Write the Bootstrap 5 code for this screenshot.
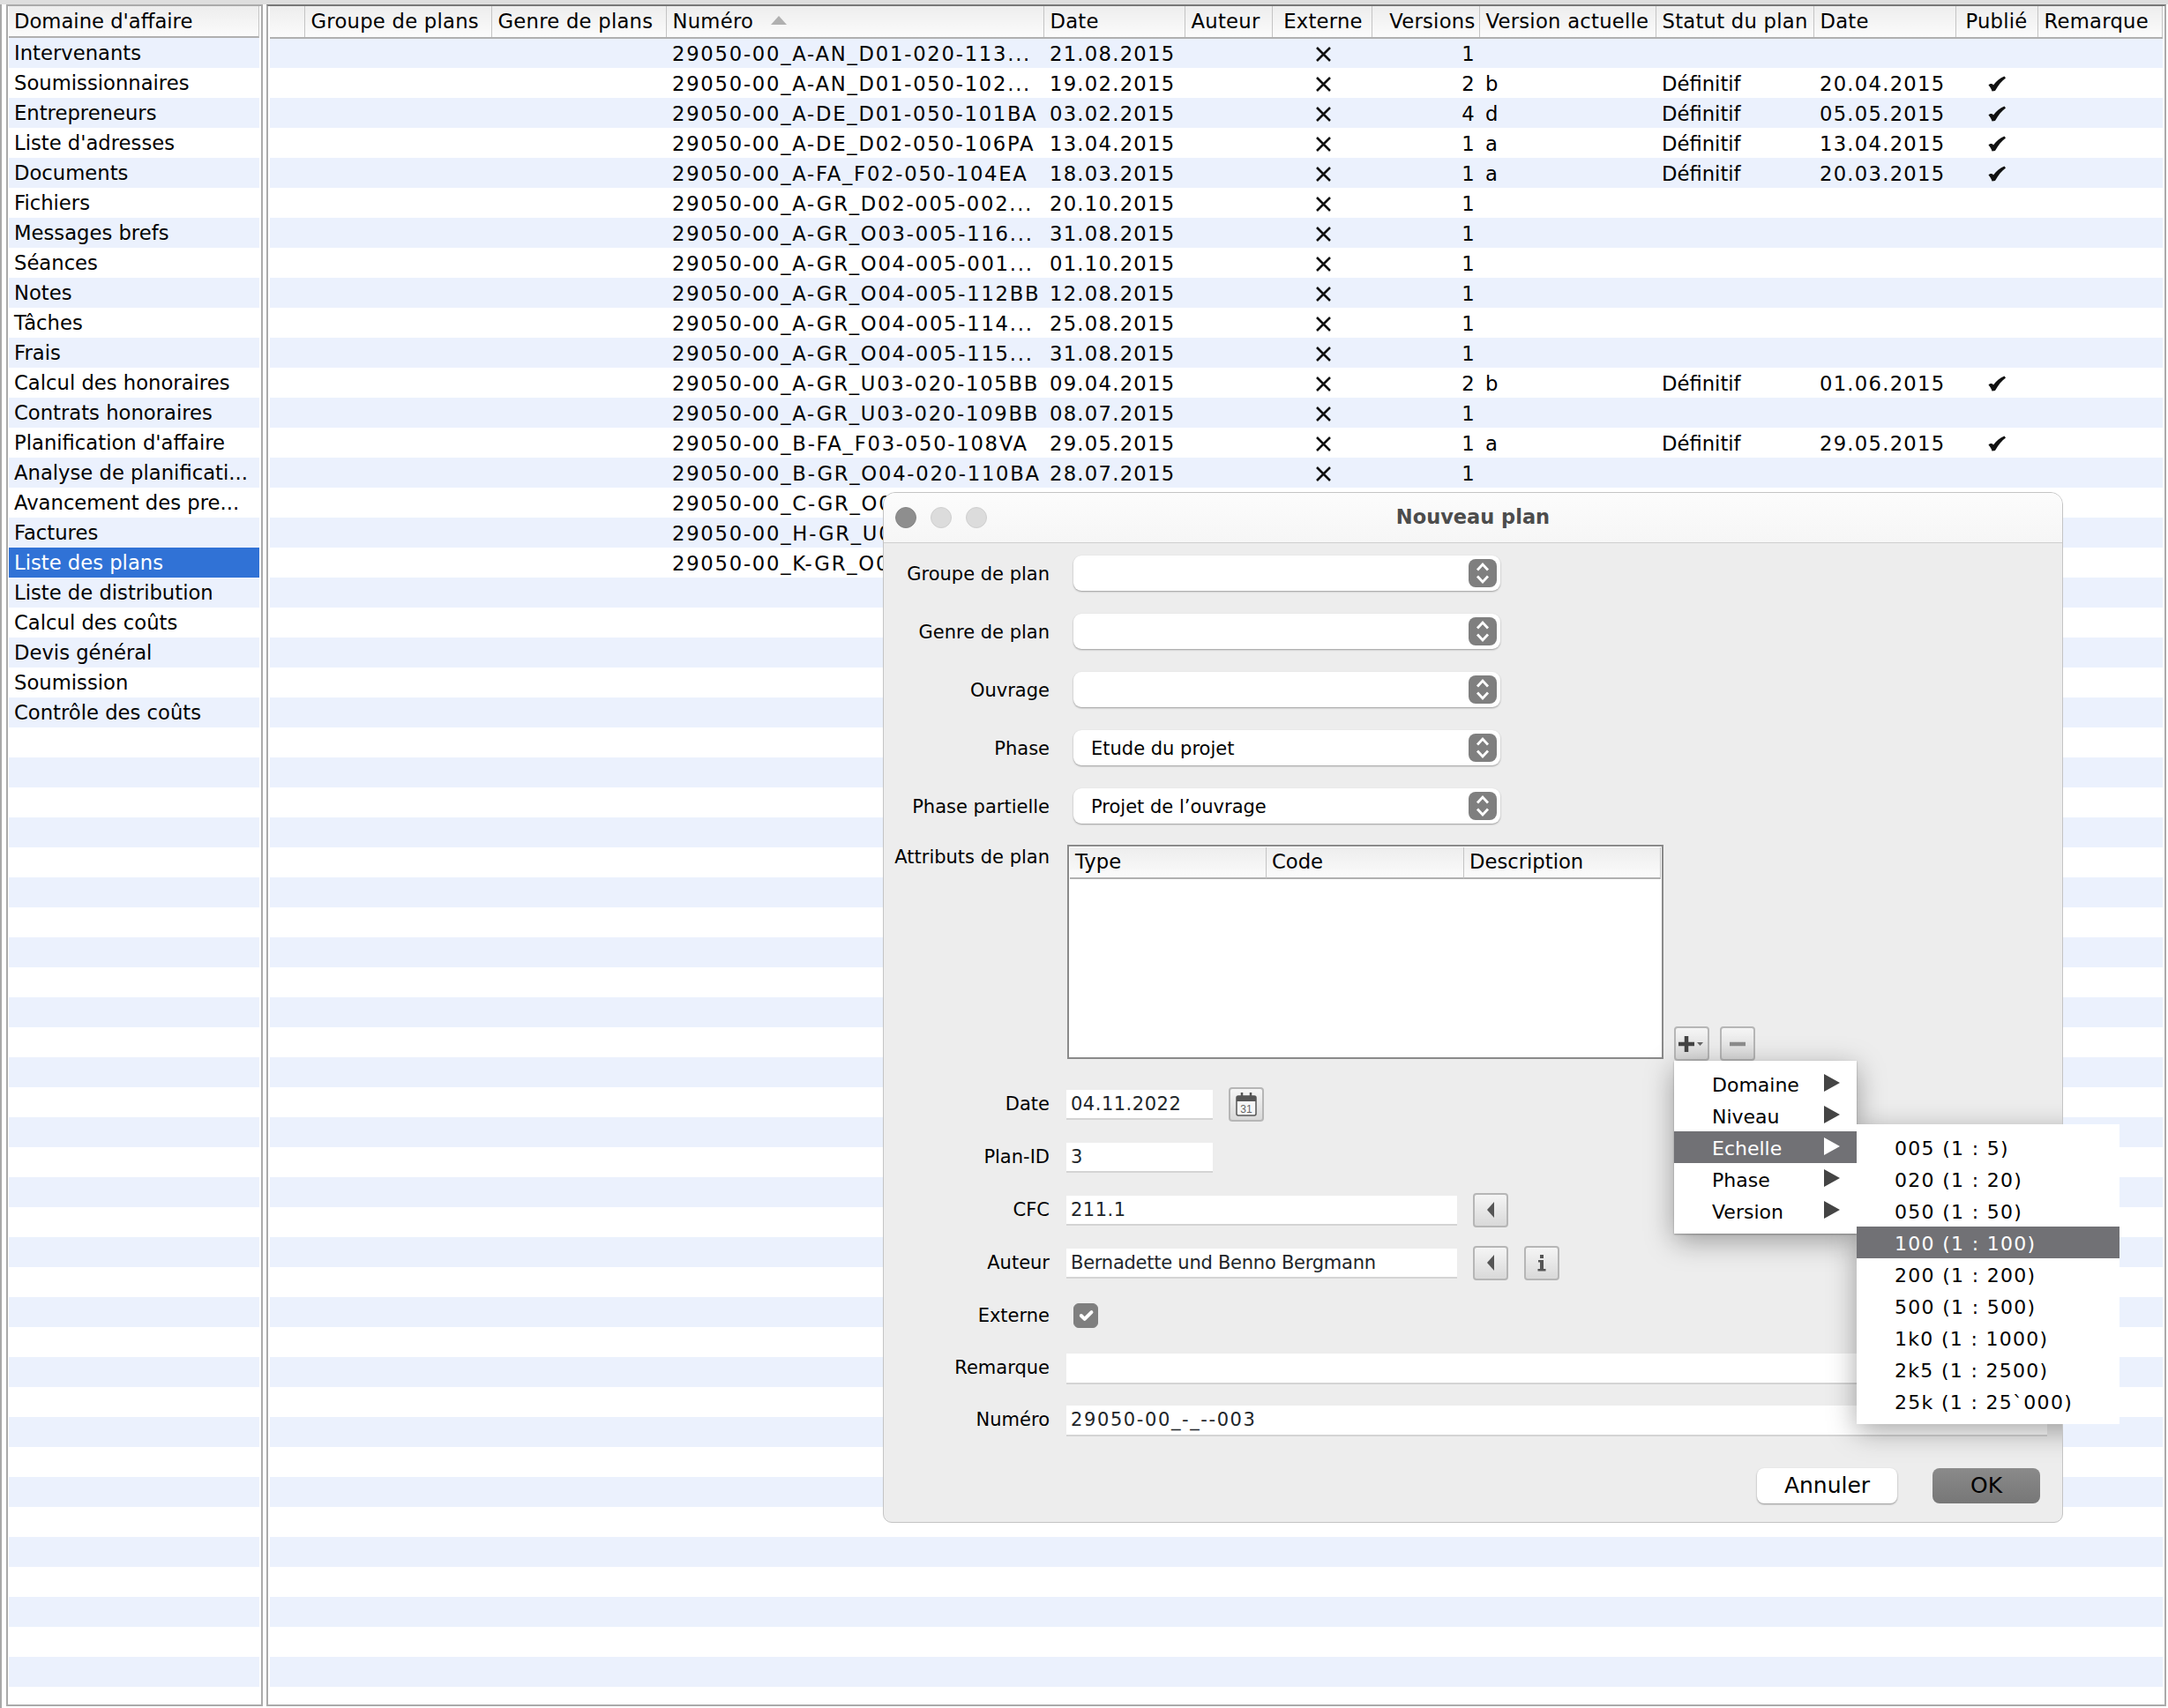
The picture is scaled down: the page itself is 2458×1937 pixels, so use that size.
<!DOCTYPE html>
<html lang="fr">
<head>
    <meta charset="UTF-8">
    <meta name="viewport" content="width=device-width, initial-scale=1.0">
    <title>Liste des plans</title>
    <link href="https://cdn.jsdelivr.net/npm/bootstrap@5.3.2/dist/css/bootstrap.min.css" rel="stylesheet">
    <style>
        html, body { height: 100%; overflow: hidden; }
        body { font-family: "DejaVu Sans", sans-serif; font-size: 22.7px; color: #000; background: #fff; }

        /* main window */
        .top-strip { height: 5px; background: #dedede; flex: none; }
        .panels { flex: 1; min-height: 0; border-left: 2px solid #a8a8a8; padding-left: 5px; padding-bottom: 2px; }
        .side-panel { width: 291px; flex: none; border: 2px solid #aaa; padding: 0 2px 0 1px; margin-right: 4px; }
        .main-panel { flex: 1; min-width: 0; border: 2px solid #aaa; border-top-color: #777; padding: 0 2px; margin-right: 2px; }
        .stripes { background: repeating-linear-gradient(#ebf1fd 0 34px, #fff 34px 68px); background-position: 0 36px; background-origin: content-box; background-clip: content-box; }
        .col-head { height: 36px; line-height: 35px; padding: 0 6px; background: linear-gradient(#ededed, #fbfbfb); border-bottom: 2px solid #b0b0b0; border-right: 1px solid #c4c4c4; white-space: nowrap; overflow: hidden; }
        .list-group { --bs-list-group-bg: transparent; --bs-list-group-color: #000; --bs-list-group-active-bg: #3072d6; --bs-list-group-active-color: #fff; --bs-list-group-border-width: 0; --bs-list-group-border-radius: 0; }
        .list-group-item { height: 34px; line-height: 35px; padding: 0 6px; white-space: nowrap; overflow: hidden; }

        .table { --bs-table-bg: transparent; --bs-table-color: #000; --bs-border-width: 0; table-layout: fixed; margin: 0; }
        .table > :not(caption) > * > * { padding: 1px 7px 0; height: 34px; line-height: 33px; vertical-align: middle; white-space: nowrap; overflow: hidden; box-shadow: none; border-bottom-width: 0; }
        .table > thead > tr > th { height: 36px; padding-top: 0; line-height: 35px; font-weight: 400; letter-spacing: .25px; background: linear-gradient(#ededed, #fbfbfb); border-bottom: 2px solid #b0b0b0; border-right: 1px solid #c4c4c4; }
        .table > :not(caption) > * > .tight { padding-right: 4px; }
        .table > :not(caption) > * > .ext-col { padding-left: 10px; }
        .plans td { letter-spacing: 1.25px; }
        .plans td.no { letter-spacing: 1.75px; }
        .plans td.st { letter-spacing: 0; }
        .plans td svg { margin-top: -3px; }
        .sort-up { display: inline-block; width: 18px; height: 10px; margin-left: 12px; vertical-align: 4px; }

        /* dialog */
        .dialog { left: 1001px; top: 558px; width: 1338px; height: 1169px; background: #ededed; border: 1px solid #c4c4c4; border-radius: 14px 14px 10px 10px; overflow: hidden; font-size: 21px; }
        .title-bar { height: 57px; background: linear-gradient(#fcfcfc, #f6f6f6); border-bottom: 1px solid #cfcfcf; padding-left: 13px; }
        .light { width: 24px; height: 24px; border-radius: 50%; background: #dcdcdc; border: 1px solid #cfcfcf; margin-right: 16px; }
        .light.on { background: #8e8e8e; border-color: #858585; }
        .title-text { left: 0; right: 0; top: 0; line-height: 54px; text-align: center; font-weight: 700; font-size: 22.5px; color: #4c4c4c; }
        .dialog-body { padding-top: 14px; }
        .lbl { width: 188px; flex: none; text-align: right; white-space: nowrap; padding-top: 3px; }
        .sel { width: 484px; height: 40px; margin-left: 27px; padding: 0 4px 0 20px; background: #fff; border-radius: 9px; box-shadow: 0 1px 2px rgba(0,0,0,.35); }
        .sel span { padding-top: 3px; }
        .stepper { width: 32px; height: 32px; border-radius: 8px; background: #7f7f7f; }
        .sel-row { margin-bottom: 26px; }
        .attr-row { height: 245px; margin-top: -2px; margin-bottom: 29px; }
        .attr-lbl { line-height: 25px; padding-top: 2px; }
        .attr-table { width: 676px; height: 243px; margin-left: 20px; background: #fff; border: 2px solid #8a8a8a; padding: 1px; align-self: flex-start; }
        .attr-table .col-head { height: 36px; line-height: 32px; padding: 0 6px; font-size: 22.7px; }
        .mini-btn { --bs-btn-padding-x: 0; --bs-btn-padding-y: 0; --bs-btn-border-radius: 4px; --bs-btn-border-width: 2px; --bs-btn-border-color: #b6b6b6; --bs-btn-hover-border-color: #b6b6b6; width: 40px; height: 39px; flex: none; background: linear-gradient(#f5f5f5, #d9d9d9); display: flex; align-items: center; justify-content: center; }
        .f-row { height: 40px; margin-bottom: 20px; }
        .f-row .lbl { padding-top: 1px; }
        .f-row.thin { height: 38px; margin-bottom: 21px; }
        .form-control.fld { height: 32px; margin-left: 19px; padding: 0 5px; line-height: 32px; font-size: 21px; letter-spacing: .5px; border: 0; border-radius: 0; background: #fff; box-shadow: 0 2px 0 #d4d4d4; white-space: nowrap; }
        .form-control.fld.name { letter-spacing: -.25px; }
        .form-control.fld.code { letter-spacing: 1.6px; }
        .thin .form-control.fld { height: 33px; width: 1112px; flex: none; }
        .w-short { width: 166px; flex: none; }
        .w-long { width: 443px; flex: none; }
        .form-check-input.ext { width: 28px; height: 28px; margin: 0 0 0 27px; border-radius: 6px; background-color: #7f7f7f; border-color: #7f7f7f; }
        .act { margin-left: 18px; }
        .footer-btns { margin-top: 36px; padding-right: 25px; gap: 40px; }
        .btn-annuler, .btn-ok { --bs-btn-border-radius: 8px; --bs-btn-border-width: 0; height: 40px; padding: 0; font-size: 25px; line-height: 40px; color: #000; }
        .btn-annuler { width: 159px; background: #fff; box-shadow: 0 1px 2px rgba(0,0,0,.4); }
        .btn-ok { width: 122px; background: linear-gradient(#8a8a8a, #777); }

        /* popup menus */
        .menu-shadow { box-shadow: 0 8px 30px rgba(0,0,0,.35); }
        .dropdown-menu.pop { --bs-dropdown-bg: #fff; --bs-dropdown-border-width: 0; --bs-dropdown-border-radius: 0; --bs-dropdown-padding-y: 8px; --bs-dropdown-padding-x: 0; --bs-dropdown-font-size: 22px; --bs-dropdown-color: #000; --bs-dropdown-link-color: #000; --bs-dropdown-link-active-bg: #717175; --bs-dropdown-link-active-color: #fff; --bs-dropdown-item-padding-y: 0; min-width: 0; }
        .pop .dropdown-item { height: 36px; line-height: 40px; }
        .menu-one { left: 1898px; top: 1203px; width: 207px; box-shadow: 0 1px 2px rgba(0,0,0,.3); }
        .menu-one .dropdown-item { padding: 0 19px 0 43px; }
        .menu-one svg { margin-top: -3px; }
        .menu-two { left: 2105px; top: 1275px; width: 298px; }
        .menu-two .dropdown-item { padding: 0 0 0 43px; letter-spacing: 1.3px; }
        .tri { fill: #444; }
        .active .tri { fill: #fff; }
        .shadow-one { left: 896px; top: 644px; width: 207px; height: 196px; }
        .shadow-two { left: 1103px; top: 716px; width: 298px; height: 340px; }
    </style>
</head>
<body class="d-flex flex-column position-relative">
    <svg width="0" height="0" class="position-absolute">
        <symbol id="ic-x" viewBox="0 0 17 17"><path d="M1 1 16 16M16 1 1 16" stroke="#111" stroke-width="2.6" fill="none"/></symbol>
        <symbol id="ic-check" viewBox="0 0 20 18"><path d="M.5 10.500C2 8.500 5 8.500 6 10.500 9.500 6 13.500 2.500 18.500 .5L20 2.500C15 6 11.500 11 8 17L4.500 17.500C4 15 2 12.500 .5 10.500Z" fill="#111"/></symbol>
        <symbol id="ic-step" viewBox="0 0 32 32"><path d="M10 12.500 16 6l6 6.500M10 19.500 16 26l6-6.500" stroke="#fff" stroke-width="2.800" fill="none"/></symbol>
        <symbol id="ic-left" viewBox="0 0 10 20"><path d="M9 1v18L1 10Z" fill="#555"/></symbol>
    </svg>

    <div class="top-strip"></div>

    <div class="panels d-flex">
        <!-- domain list -->
        <div class="side-panel stripes">
            <div class="col-head">Domaine d'affaire</div>
            <div class="list-group">
                <div class="list-group-item">Intervenants</div>
                <div class="list-group-item">Soumissionnaires</div>
                <div class="list-group-item">Entrepreneurs</div>
                <div class="list-group-item">Liste d'adresses</div>
                <div class="list-group-item">Documents</div>
                <div class="list-group-item">Fichiers</div>
                <div class="list-group-item">Messages brefs</div>
                <div class="list-group-item">Séances</div>
                <div class="list-group-item">Notes</div>
                <div class="list-group-item">Tâches</div>
                <div class="list-group-item">Frais</div>
                <div class="list-group-item">Calcul des honoraires</div>
                <div class="list-group-item">Contrats honoraires</div>
                <div class="list-group-item">Planification d'affaire</div>
                <div class="list-group-item">Analyse de planificati...</div>
                <div class="list-group-item">Avancement des pre...</div>
                <div class="list-group-item">Factures</div>
                <div class="list-group-item active">Liste des plans</div>
                <div class="list-group-item">Liste de distribution</div>
                <div class="list-group-item">Calcul des coûts</div>
                <div class="list-group-item">Devis général</div>
                <div class="list-group-item">Soumission</div>
                <div class="list-group-item">Contrôle des coûts</div>
            </div>
        </div>

        <!-- plan table -->
        <div class="main-panel stripes">
            <table class="table plans">
                <colgroup>
                    <col style="width:39px"><col style="width:212px"><col style="width:198px"><col style="width:428px"><col style="width:160px"><col style="width:99px"><col style="width:113px"><col style="width:122px"><col style="width:200px"><col style="width:179px"><col style="width:161px"><col style="width:93px"><col>
                </colgroup>
                <thead>
                    <tr>
                        <th></th><th>Groupe de plans</th><th>Genre de plans</th>
                        <th>Numéro <svg class="sort-up" viewBox="0 0 18 10"><path d="M9 0 18 10H0Z" fill="#b0b0b0"/></svg></th>
                        <th>Date</th><th>Auteur</th><th class="text-center ext-col">Externe</th><th class="text-end tight">Versions</th>
                        <th>Version actuelle</th><th>Statut du plan</th><th>Date</th><th class="text-center">Publié</th><th>Remarque</th>
                    </tr>
                </thead>
                <tbody>
                    <tr><td colspan="3"></td><td class="no">29050-00_A-AN_D01-020-113...</td><td>21.08.2015</td><td></td><td class="text-center ext-col"><svg width="17" height="17"><use href="#ic-x"/></svg></td><td class="text-end tight">1</td><td colspan="5"></td></tr>
                    <tr><td colspan="3"></td><td class="no">29050-00_A-AN_D01-050-102...</td><td>19.02.2015</td><td></td><td class="text-center ext-col"><svg width="17" height="17"><use href="#ic-x"/></svg></td><td class="text-end tight">2</td><td>b</td><td class="st">Définitif</td><td>20.04.2015</td><td class="text-center"><svg width="20" height="18"><use href="#ic-check"/></svg></td><td></td></tr>
                    <tr><td colspan="3"></td><td class="no">29050-00_A-DE_D01-050-101BA</td><td>03.02.2015</td><td></td><td class="text-center ext-col"><svg width="17" height="17"><use href="#ic-x"/></svg></td><td class="text-end tight">4</td><td>d</td><td class="st">Définitif</td><td>05.05.2015</td><td class="text-center"><svg width="20" height="18"><use href="#ic-check"/></svg></td><td></td></tr>
                    <tr><td colspan="3"></td><td class="no">29050-00_A-DE_D02-050-106PA</td><td>13.04.2015</td><td></td><td class="text-center ext-col"><svg width="17" height="17"><use href="#ic-x"/></svg></td><td class="text-end tight">1</td><td>a</td><td class="st">Définitif</td><td>13.04.2015</td><td class="text-center"><svg width="20" height="18"><use href="#ic-check"/></svg></td><td></td></tr>
                    <tr><td colspan="3"></td><td class="no">29050-00_A-FA_F02-050-104EA</td><td>18.03.2015</td><td></td><td class="text-center ext-col"><svg width="17" height="17"><use href="#ic-x"/></svg></td><td class="text-end tight">1</td><td>a</td><td class="st">Définitif</td><td>20.03.2015</td><td class="text-center"><svg width="20" height="18"><use href="#ic-check"/></svg></td><td></td></tr>
                    <tr><td colspan="3"></td><td class="no">29050-00_A-GR_D02-005-002...</td><td>20.10.2015</td><td></td><td class="text-center ext-col"><svg width="17" height="17"><use href="#ic-x"/></svg></td><td class="text-end tight">1</td><td colspan="5"></td></tr>
                    <tr><td colspan="3"></td><td class="no">29050-00_A-GR_O03-005-116...</td><td>31.08.2015</td><td></td><td class="text-center ext-col"><svg width="17" height="17"><use href="#ic-x"/></svg></td><td class="text-end tight">1</td><td colspan="5"></td></tr>
                    <tr><td colspan="3"></td><td class="no">29050-00_A-GR_O04-005-001...</td><td>01.10.2015</td><td></td><td class="text-center ext-col"><svg width="17" height="17"><use href="#ic-x"/></svg></td><td class="text-end tight">1</td><td colspan="5"></td></tr>
                    <tr><td colspan="3"></td><td class="no">29050-00_A-GR_O04-005-112BB</td><td>12.08.2015</td><td></td><td class="text-center ext-col"><svg width="17" height="17"><use href="#ic-x"/></svg></td><td class="text-end tight">1</td><td colspan="5"></td></tr>
                    <tr><td colspan="3"></td><td class="no">29050-00_A-GR_O04-005-114...</td><td>25.08.2015</td><td></td><td class="text-center ext-col"><svg width="17" height="17"><use href="#ic-x"/></svg></td><td class="text-end tight">1</td><td colspan="5"></td></tr>
                    <tr><td colspan="3"></td><td class="no">29050-00_A-GR_O04-005-115...</td><td>31.08.2015</td><td></td><td class="text-center ext-col"><svg width="17" height="17"><use href="#ic-x"/></svg></td><td class="text-end tight">1</td><td colspan="5"></td></tr>
                    <tr><td colspan="3"></td><td class="no">29050-00_A-GR_U03-020-105BB</td><td>09.04.2015</td><td></td><td class="text-center ext-col"><svg width="17" height="17"><use href="#ic-x"/></svg></td><td class="text-end tight">2</td><td>b</td><td class="st">Définitif</td><td>01.06.2015</td><td class="text-center"><svg width="20" height="18"><use href="#ic-check"/></svg></td><td></td></tr>
                    <tr><td colspan="3"></td><td class="no">29050-00_A-GR_U03-020-109BB</td><td>08.07.2015</td><td></td><td class="text-center ext-col"><svg width="17" height="17"><use href="#ic-x"/></svg></td><td class="text-end tight">1</td><td colspan="5"></td></tr>
                    <tr><td colspan="3"></td><td class="no">29050-00_B-FA_F03-050-108VA</td><td>29.05.2015</td><td></td><td class="text-center ext-col"><svg width="17" height="17"><use href="#ic-x"/></svg></td><td class="text-end tight">1</td><td>a</td><td class="st">Définitif</td><td>29.05.2015</td><td class="text-center"><svg width="20" height="18"><use href="#ic-check"/></svg></td><td></td></tr>
                    <tr><td colspan="3"></td><td class="no">29050-00_B-GR_O04-020-110BA</td><td>28.07.2015</td><td></td><td class="text-center ext-col"><svg width="17" height="17"><use href="#ic-x"/></svg></td><td class="text-end tight">1</td><td colspan="5"></td></tr>
                    <tr><td colspan="3"></td><td class="no">29050-00_C-GR_O0</td><td colspan="9"></td></tr>
                    <tr><td colspan="3"></td><td class="no">29050-00_H-GR_U0</td><td colspan="9"></td></tr>
                    <tr><td colspan="3"></td><td class="no">29050-00_K-GR_O0</td><td colspan="9"></td></tr>
                </tbody>
            </table>
        </div>
    </div>

    <!-- Nouveau plan dialog -->
    <div class="dialog position-absolute">
        <div class="menu-shadow shadow-one position-absolute"></div>
        <div class="menu-shadow shadow-two position-absolute"></div>

        <div class="title-bar d-flex align-items-center position-relative">
            <span class="light on"></span><span class="light"></span><span class="light"></span>
            <div class="title-text position-absolute">Nouveau plan</div>
        </div>

        <div class="dialog-body">
            <div class="sel-row d-flex align-items-center">
                <div class="lbl">Groupe de plan</div>
                <div class="sel d-flex align-items-center justify-content-between"><span></span><svg class="stepper"><use href="#ic-step"/></svg></div>
            </div>
            <div class="sel-row d-flex align-items-center">
                <div class="lbl">Genre de plan</div>
                <div class="sel d-flex align-items-center justify-content-between"><span></span><svg class="stepper"><use href="#ic-step"/></svg></div>
            </div>
            <div class="sel-row d-flex align-items-center">
                <div class="lbl">Ouvrage</div>
                <div class="sel d-flex align-items-center justify-content-between"><span></span><svg class="stepper"><use href="#ic-step"/></svg></div>
            </div>
            <div class="sel-row d-flex align-items-center">
                <div class="lbl">Phase</div>
                <div class="sel d-flex align-items-center justify-content-between"><span>Etude du projet</span><svg class="stepper"><use href="#ic-step"/></svg></div>
            </div>
            <div class="sel-row d-flex align-items-center">
                <div class="lbl">Phase partielle</div>
                <div class="sel d-flex align-items-center justify-content-between"><span>Projet de l’ouvrage</span><svg class="stepper"><use href="#ic-step"/></svg></div>
            </div>

            <div class="attr-row d-flex">
                <div class="lbl attr-lbl">Attributs de plan</div>
                <div class="attr-table">
                    <div class="d-flex">
                        <div class="col-head" style="width:223px">Type</div>
                        <div class="col-head" style="width:224px">Code</div>
                        <div class="col-head flex-grow-1">Description</div>
                    </div>
                </div>
                <div class="d-flex align-items-end gap-2 ms-2">
                    <button class="btn mini-btn ms-1" type="button">
                        <svg width="30" height="18" viewBox="0 0 30 18"><path d="M0 9h18M9 0v18" stroke="#444" stroke-width="4.500"/><path d="M21 7h7l-3.500 4Z" fill="#666"/></svg>
                    </button>
                    <button class="btn mini-btn ms-1" type="button">
                        <svg width="18" height="6" viewBox="0 0 18 6"><path d="M0 3h18" stroke="#8c8c8c" stroke-width="4.500"/></svg>
                    </button>
                </div>
            </div>

            <div class="f-row d-flex align-items-center">
                <div class="lbl">Date</div>
                <div class="form-control fld w-short">04.11.2022</div>
                <button class="btn mini-btn act" type="button">
                    <svg width="24" height="28" viewBox="0 0 24 28"><rect x="1" y="5" width="22" height="22" rx="2" fill="#f6f6f6" stroke="#555" stroke-width="1.500"/><path d="M1 5h22v6H1Z" fill="#555"/><path d="M7 1v7M17 1v7" stroke="#555" stroke-width="2.500"/><text x="12" y="24" text-anchor="middle" font-size="12" fill="#666" font-family="Liberation Sans, sans-serif">31</text></svg>
                </button>
            </div>
            <div class="f-row d-flex align-items-center">
                <div class="lbl">Plan-ID</div>
                <div class="form-control fld w-short">3</div>
            </div>
            <div class="f-row d-flex align-items-center">
                <div class="lbl">CFC</div>
                <div class="form-control fld w-long">211.1</div>
                <button class="btn mini-btn act" type="button"><svg width="10" height="20"><use href="#ic-left"/></svg></button>
            </div>
            <div class="f-row d-flex align-items-center">
                <div class="lbl">Auteur</div>
                <div class="form-control fld w-long name">Bernadette und Benno Bergmann</div>
                <button class="btn mini-btn act" type="button"><svg width="10" height="20"><use href="#ic-left"/></svg></button>
                <button class="btn mini-btn act" type="button">
                    <svg width="10" height="20" viewBox="0 0 10 20"><path d="M3 1h4v4H3ZM1 7h6v10h2.500v2.500H.5V17H3v-7.500H1Z" fill="#555"/></svg>
                </button>
            </div>
            <div class="f-row d-flex align-items-center">
                <div class="lbl">Externe</div>
                <input class="form-check-input ext" type="checkbox" checked>
            </div>
            <div class="f-row thin d-flex align-items-center">
                <div class="lbl">Remarque</div>
                <div class="form-control fld"></div>
            </div>
            <div class="f-row thin d-flex align-items-center">
                <div class="lbl">Numéro</div>
                <div class="form-control fld code">29050-00_-_--003</div>
            </div>

            <div class="footer-btns d-flex justify-content-end">
                <button class="btn btn-annuler" type="button">Annuler</button>
                <button class="btn btn-ok" type="button">OK</button>
            </div>
        </div>
    </div>

    <!-- plus button menu -->
    <div class="dropdown-menu pop show position-absolute menu-one">
        <a class="dropdown-item d-flex justify-content-between" href="#">Domaine <svg width="18" height="20" class="align-self-center"><path class="tri" d="M0 0 18 10 0 20Z"/></svg></a>
        <a class="dropdown-item d-flex justify-content-between" href="#">Niveau <svg width="18" height="20" class="align-self-center"><path class="tri" d="M0 0 18 10 0 20Z"/></svg></a>
        <a class="dropdown-item active d-flex justify-content-between" href="#">Echelle <svg width="18" height="20" class="align-self-center"><path class="tri" d="M0 0 18 10 0 20Z"/></svg></a>
        <a class="dropdown-item d-flex justify-content-between" href="#">Phase <svg width="18" height="20" class="align-self-center"><path class="tri" d="M0 0 18 10 0 20Z"/></svg></a>
        <a class="dropdown-item d-flex justify-content-between" href="#">Version <svg width="18" height="20" class="align-self-center"><path class="tri" d="M0 0 18 10 0 20Z"/></svg></a>
    </div>
    <div class="dropdown-menu pop show position-absolute menu-two">
        <a class="dropdown-item" href="#">005 (1 : 5)</a>
        <a class="dropdown-item" href="#">020 (1 : 20)</a>
        <a class="dropdown-item" href="#">050 (1 : 50)</a>
        <a class="dropdown-item active" href="#">100 (1 : 100)</a>
        <a class="dropdown-item" href="#">200 (1 : 200)</a>
        <a class="dropdown-item" href="#">500 (1 : 500)</a>
        <a class="dropdown-item" href="#">1k0 (1 : 1000)</a>
        <a class="dropdown-item" href="#">2k5 (1 : 2500)</a>
        <a class="dropdown-item" href="#">25k (1 : 25`000)</a>
    </div>

    <script src="https://cdn.jsdelivr.net/npm/bootstrap@5.3.2/dist/js/bootstrap.bundle.min.js"></script>
</body>
</html>
